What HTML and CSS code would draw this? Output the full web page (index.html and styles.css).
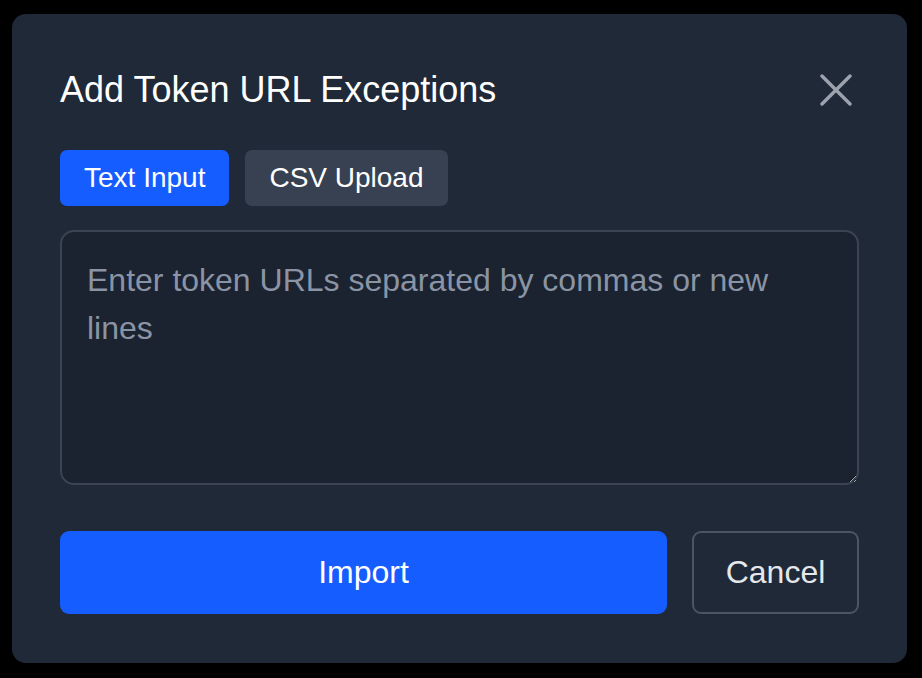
FILE: index.html
```html
<!DOCTYPE html>
<html>
<head>
<meta charset="utf-8">
<link rel="stylesheet" href="styles.css">
</head>
<body>
<div class="modal">
  <div class="header">
    <h2 class="title">Add Token URL Exceptions</h2>
    <button class="close" aria-label="Close">
      <svg width="32" height="32" viewBox="0 0 32 32"><path d="M2 2 L30 30 M30 2 L2 30" stroke="#9ca3af" stroke-width="3.4" stroke-linecap="round" fill="none"/></svg>
    </button>
  </div>
  <div class="tabs">
    <button class="tab active">Text Input</button>
    <button class="tab">CSV Upload</button>
  </div>
  <textarea class="input" placeholder="Enter token URLs separated by commas or new lines"></textarea>
  <div class="actions">
    <button class="btn primary">Import</button>
    <button class="btn secondary">Cancel</button>
  </div>
</div>
</body>
</html>
```
FILE: styles.css
```css
html, body {
  margin: 0;
  padding: 0;
  background: #000;
  width: 922px;
  height: 678px;
  overflow: hidden;
  font-family: "Liberation Sans", Arial, sans-serif;
}
.modal {
  box-sizing: border-box;
  margin: 14px 0 0 12px;
  width: 895px;
  height: 649px;
  background: #1f2937;
  border-radius: 14px;
  padding: 48px 48px 49px 48px;
  display: flex;
  flex-direction: column;
}
.header {
  height: 56px;
  display: flex;
  align-items: center;
  justify-content: space-between;
  margin-bottom: 32px;
}
.title {
  margin: 0;
  font-size: 36px;
  font-weight: 400;
  color: #ffffff;
  line-height: 56px;
}
.close {
  background: none;
  border: none;
  padding: 0;
  width: 32px;
  height: 32px;
  margin-right: 7px;
  display: flex;
}
.tabs {
  display: flex;
  gap: 16px;
  margin-bottom: 25px;
}
.tab {
  height: 56px;
  padding: 0 24px;
  border: none;
  border-radius: 7px;
  background: #374151;
  color: #ffffff;
  font-family: inherit;
  font-size: 28px;
}
.tab.active {
  background: #165dff;
}
.input {
  box-sizing: border-box;
  height: 255px;
  width: 100%;
  margin: -1px 0 46px 0;
  padding: 24px 25px 22px;
  background: #1b2230;
  border: 2px solid #3b4453;
  border-radius: 14px;
  color: #fff;
  font-family: inherit;
  font-size: 32px;
  line-height: 48px;
  outline: none;
}
.input::placeholder {
  color: #8a94a4;
}
.actions {
  display: flex;
  gap: 25px;
}
.btn {
  height: 83px;
  border-radius: 9px;
  font-family: inherit;
  font-size: 32px;
  color: #fff;
}
.btn.primary {
  flex: 1;
  background: #165dff;
  border: none;
}
.btn.secondary {
  width: 167px;
  background: transparent;
  border: 2px solid #4b5563;
  color: #e5e7eb;
}
```
